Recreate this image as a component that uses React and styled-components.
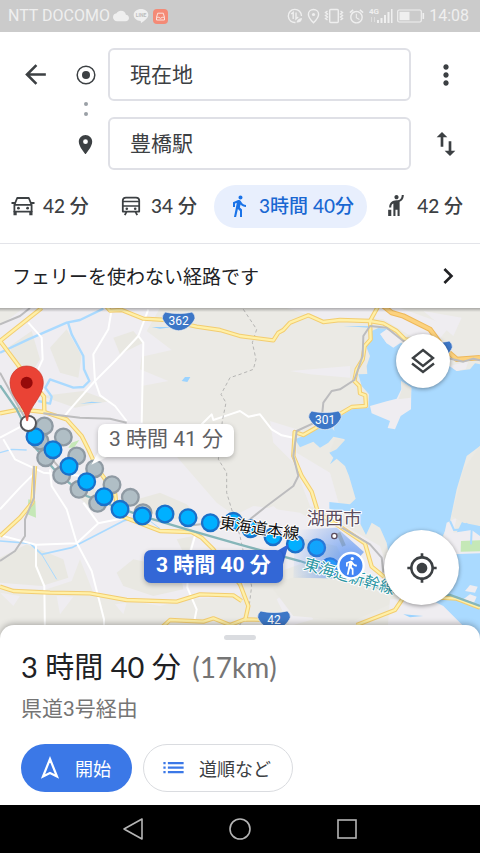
import styled, { createGlobalStyle } from "styled-components";
import {
  MdAlarm,
  MdArrowBack,
  MdChevronRight,
  MdCloud,
  MdDirectionsWalk,
  MdHail,
  MdList,
  MdMoreVert,
  MdMyLocation,
  MdPlace,
  MdSwapVert,
} from "react-icons/md";

const GlobalStyle = createGlobalStyle`
  * {
    box-sizing: border-box;
  }
  body {
    margin: 0;
    background: #fff;
    color: #3c4043;
    font-family: Roboto, "Noto Sans CJK JP", sans-serif;
  }
  button, input {
    font: inherit;
    color: inherit;
  }
  svg {
    display: block;
    flex-shrink: 0;
  }
`;

const brandFont = `Lato, "Noto Sans CJK JP", sans-serif`;

const Page = styled.div`
  display: flex;
  flex-direction: column;
  min-height: 100vh;
`;

const StatusBar = styled.div`
  display: flex;
  align-items: center;
  justify-content: space-between;
  height: 32px;
  padding: 0 11px 0 8px;
  background: #cbcbcb;
  color: #efefef;
  font-size: 16px;
  line-height: 32px;
`;

const StatusGroup = styled.div`
  display: flex;
  align-items: center;
  gap: ${props => props.$gap}px;
`;

const Directions = styled.header`
  padding: 16px 0 15px;
  border-bottom: 1px solid #e3e4e9;
`;

const Stops = styled.div`
  display: grid;
  grid-template-columns: 70px 31px 1fr 69px;
  row-gap: 16px;
  align-items: center;
  justify-items: center;
`;

const IconButton = styled.button`
  display: flex;
  align-items: center;
  justify-content: center;
  width: 48px;
  height: 48px;
  padding: 0;
  border: 0;
  background: none;
`;

const StopInput = styled.input`
  justify-self: stretch;
  min-width: 0;
  height: 53px;
  margin-left: 7px;
  padding: 0 20px 3px;
  border: 2px solid #dfe0e6;
  border-radius: 6px;
  background: #fff;
  font-size: 21px;
  outline: none;
`;

const StopMarks = styled.div`
  grid-column: 2;
  grid-row: 1 / span 2;
  display: flex;
  flex-direction: column;
  align-items: center;
  gap: 17px;
  padding-top: 2px;
`;

const Modes = styled.nav`
  display: flex;
  justify-content: space-between;
  margin: 15px 4px 0 -2px;
`;

const ModeButton = styled.button`
  display: flex;
  align-items: center;
  gap: 8px;
  height: 43px;
  padding: 0 13px 2px;
  border: 0;
  border-radius: 22px;
  background: ${props => (props.$active ? "#e8effd" : "none")};
  color: ${props => (props.$active ? "#1967d2" : "#3c4043")};
  font-family: ${brandFont};
  font-size: 19px;
  font-weight: 500;
  line-height: 24px;
  white-space: nowrap;
`;

const Notice = styled.button`
  display: flex;
  align-items: center;
  justify-content: space-between;
  height: 64px;
  padding: 0 16px 1px 12px;
  border: 0;
  background: #fff;
  color: #202124;
  font-size: 19px;
  text-align: left;
`;

const Map = styled.main`
  position: relative;
  flex: 1 0 333px;
  overflow: hidden;
  background: #ebeae5;
`;

const MapCanvas = styled.svg`
  width: 100%;
  height: 100%;
  position: absolute;
  inset: 0;
`;

const MapShade = styled.div`
  position: absolute;
  inset: 0 0 auto;
  height: 4px;
  background: linear-gradient(rgba(0, 0, 0, 0.28), transparent);
`;

const RouteBubble = styled.button`
  position: absolute;
  left: calc(50% + ${props => props.$x}px);
  top: ${props => props.$y}px;
  height: 33px;
  padding: 0 ${props => (props.$active ? 12 : 11)}px 3px;
  border: 0;
  border-radius: 7px;
  background: ${props => (props.$active ? "#3367d6" : "#fff")};
  color: ${props => (props.$active ? "#fff" : "#5f6063")};
  font-size: 21px;
  font-weight: ${props => (props.$active ? 700 : 400)};
  line-height: 30px;
  white-space: nowrap;
  box-shadow: 0 2px 5px rgba(0, 0, 0, 0.25);
`;

const Fab = styled.button`
  position: absolute;
  right: ${props => props.$right}px;
  top: ${props => props.$top}px;
  display: flex;
  align-items: center;
  justify-content: center;
  width: ${props => props.$size}px;
  height: ${props => props.$size}px;
  padding: 0;
  border: 0;
  border-radius: 50%;
  background: #fff;
  box-shadow: 0 1px 4px rgba(0, 0, 0, 0.4);
`;

const Sheet = styled.section`
  position: relative;
  margin-top: -16px;
  padding: 10px 21px 13px;
  border-radius: 14px 14px 0 0;
  background: #fff;
  box-shadow: 0 -1px 6px rgba(0, 0, 0, 0.3);
`;

const Handle = styled.div`
  width: 32px;
  height: 5px;
  margin: 0 auto;
  border-radius: 3px;
  background: #dadce0;
`;

const Duration = styled.h1`
  margin: 7px 0 0;
  color: #202124;
  font-family: ${brandFont};
  font-size: 29px;
  font-weight: 400;
  line-height: 40px;
`;

const Distance = styled.span`
  margin-left: 4px;
  color: #757575;
  font-size: 28px;
`;

const Via = styled.p`
  margin: 6px 0 0;
  color: #757575;
  font-size: 21px;
  line-height: 32px;
`;

const Actions = styled.div`
  display: flex;
  gap: 11px;
  margin-top: 19px;
`;

const ActionButton = styled.button`
  display: flex;
  align-items: center;
  gap: 12px;
  height: 48px;
  padding: 0 21px 1px 16px;
  border: ${props => (props.$primary ? "0" : "1px solid #dadce0")};
  border-radius: 24px;
  background: ${props => (props.$primary ? "#3b78e7" : "#fff")};
  color: ${props => (props.$primary ? "#fff" : "#3c4043")};
  font-size: 18px;
`;

const NavBar = styled.footer`
  display: flex;
  align-items: center;
  justify-content: center;
  gap: 59px;
  height: 48px;
  background: #000;
`;

const RoadLines = {
  major: [
    "M0,105 L125,6",
    "M0,105 L60,185 L132,272 L133,318",
    "M0,322 L60,310 L133,318 L200,340 L245,390 L265,430 L290,485 L345,560 L350,600 L370,630",
    "M318,0 L330,14 L365,12 L430,38 L500,42 L590,62 L660,72 L720,90 L820,103 L835,80 L850,72 L870,50 L925,28 L970,48 L1020,42 L1110,45 L1135,0",
    "M1110,45 L1150,52 L1190,75 L1215,100 L1260,105",
    "M1110,45 L1112,100 L1094,120 L1088,160 L1070,190 L1063,225 L1078,240 L1080,262 L1096,268 L1098,300 L1055,303 L975,350 L910,387 L884,378 L880,450 L905,510 L935,557 L955,622 L1020,662 L1095,712 L1115,782 L1170,827 L1210,875 L1320,875 L1370,878 L1440,905",
    "M1210,875 L1185,912 L1070,957",
    "M105,480 L97,590 L60,635 L0,690",
    "M350,625 L480,675 L575,678 L605,695 L640,730 L720,835 L745,900 L735,945",
    "M0,842 L40,855 L150,860 L270,862 L380,882 L530,887 L600,865 L700,868 L725,885",
    "M485,965 L510,942 L610,947 L640,937 L690,957 L735,940 L860,943",
  ],
  minor: [
    "M85,50 L125,95 L128,160 L110,200 L130,255",
    "M335,10 L325,70 L280,145 L285,225 L210,310 L190,335",
    "M445,10 L415,90 L430,110 L425,350",
    "M415,90 L345,165 L285,225 L300,268 L345,300 L380,345",
    "M10,400 L45,460 L130,500 L250,510",
    "M0,395 L75,355",
    "M150,490 L155,540 L200,610 L230,710 L275,795 L312,940 L312,990",
    "M0,610 L60,545 L105,500",
    "M0,688 L108,716 L230,712 L295,652 L390,632",
    "M108,716 L108,780 L133,840 L135,990",
    "M250,590 L295,652",
    "M585,690 L565,760 L562,845 L590,910 L582,950",
    "M600,360 L635,325 L640,342 L690,325 L720,315 L745,332 L780,325 L815,370 L845,388 L880,395",
  ],
  rail: [
    "M0,200 L60,310 L130,430 L200,510",
    "M0,55 L60,30 L90,6",
    "M102,480 L102,575 L75,640 L75,690 L45,735 L0,765",
    "M130,322 L240,335 L330,338 L380,350",
    "M1440,163 L1420,158 L1390,167 L1330,153 L1210,105 L1160,65 L1110,60 L1090,90 L1088,150 L1063,222 L1020,250 L995,255 L970,290 L965,340 L890,375 L880,450 L895,510 L880,540 L800,600 L750,640",
    "M560,660 L720,640",
    "M1020,662 L1110,715 L1145,755 L1150,800",
  ],
};

// Centres of the dots that mark a walking route
const altDots = [
  [133, 360], [190, 393], [230, 450], [284, 488], [336, 536], [391, 574],
  [429, 620], [120, 405], [137, 455], [185, 508], [237, 550], [293, 592],
];
const routeDots = [
  [105, 392], [159, 431], [207, 481], [260, 527], [312, 572], [360, 610],
  [427, 630], [495, 624], [564, 635], [631, 650], [700, 646], [752, 668],
  [819, 692], [886, 714], [950, 725], [990, 782],
];

function Shield({ x, y, label }) {
  return (
    <g transform={`translate(${x} ${y})`}>
      <path
        d="M-40,-27 C-15,-21 15,-21 40,-27 Q50,-18 49,-8 C43,9 22,29 0,29 C-22,29 -43,9 -49,-8 Q-50,-18 -40,-27Z"
        fill="#3d77c7"
        stroke="#f0eeee"
        strokeWidth="2"
      />
      <text y="12" fill="#fff" fontSize="36" textAnchor="middle">{label}</text>
    </g>
  );
}

function MapDrawing() {
  return (
    <MapCanvas viewBox="0 6 1440 999" preserveAspectRatio="xMidYMin slice" role="img" aria-label="地図">
      <defs>
        <radialGradient id="beam" gradientUnits="userSpaceOnUse" cx="1053" cy="778" r="190">
          <stop offset="0.15" stopColor="#4285f4" stopOpacity="0.65" />
          <stop offset="1" stopColor="#4285f4" stopOpacity="0" />
        </radialGradient>
      </defs>
      <g fill="#efedf1">
        <path d="M0,60 L70,6 L480,6 L440,75 L515,132 L425,152 L420,190 L505,225 L425,240 L422,345 L520,440 L650,590 L720,640 L820,600 L880,650 L1000,640 L1140,720 L1180,840 L1050,800 L940,760 L830,800 L760,760 L720,870 L560,880 L480,900 L370,880 L280,860 L240,760 L215,825 L140,850 L0,850Z" />
        <path d="M860,6 L1200,6 L1350,60 L1310,110 L1240,95 L1150,40 L1110,35 L1060,50 L970,40Z" />
        <path d="M810,345 L890,370 L890,440 L990,500 L1030,640 L930,600 L880,470 L820,410Z" />
        <path d="M870,195 L1050,180 L1050,215 L930,205Z M1270,15 L1385,35 L1360,90Z" />
        <path d="M1200,850 L1440,900 L1440,1005 L1180,1005Z M0,860 L60,870 L40,900Z M170,870 L220,872 L180,925Z M345,895 L380,890 L370,925Z" />
        <path d="M830,880 L860,860 L900,885 L940,940 L870,960Z M720,620 L760,600 L900,620 L1000,680 L900,760 L780,700Z" />
      </g>
      <g fill="#e9e8e2">
        <path d="M30,120 L95,75 L120,160 L95,200 L60,190 L35,150Z M150,125 L200,70 L245,150 L235,215 L180,200Z" />
        <path d="M340,95 L400,75 L430,110 L360,145Z M125,270 L250,255 L330,285 L225,305Z" />
        <path d="M0,755 L80,715 L190,760 L205,815 L125,840 L0,830Z M375,590 L480,560 L560,595 L600,640 L500,640Z" />
        <path d="M400,760 L540,790 L550,850 L460,870 L370,840 L350,800Z M530,700 L580,690 L560,760Z" />
        <path d="M860,820 L980,790 L1140,850 L1180,890 L1060,945 L880,930 L820,850Z" />
        <path d="M900,695 L1010,720 L1030,760 L930,750Z M250,520 L330,590 L290,620 L220,560Z" />
      </g>
      <path
        d="M1115,75 L1135,66 L1165,70 L1145,90 L1160,112 L1205,110 L1225,150 L1348,180 L1370,195 L1410,190 L1425,172 L1440,175 L1440,420 L1400,450 L1370,550 L1350,645 L1328,690 L1350,720 L1390,640 L1440,660 L1440,1005 L1390,960 L1330,900 L1250,860 L1180,820 L1160,710 L1140,665 L1115,650 L1098,687 L1075,642 L1040,622 L988,608 L988,588 L1050,595 L1067,578 L1047,510 L1035,480 L1010,458 L990,475 L1000,455 L988,440 L1035,400 L1000,392 L985,410 L960,425 L940,407 L900,424 L885,400 L910,390 L985,350 L1003,375 L998,345 L1055,310 L1105,305 L1107,265 L1085,240 L1075,205 L1102,204 L1100,180 L1110,150 L1100,125Z"
        fill="#aadaff"
      />
      <g fill="#efedf1">
        <path d="M1203,225 L1234,245 L1233,310 L1202,330 L1185,370 L1163,366 L1170,345 L1115,322 L1110,300 L1160,286 L1190,278 L1204,250Z" />
        <path d="M1140,84 L1160,70 L1210,105 L1180,125 L1160,112Z M1350,180 L1405,165 L1398,188 L1370,195Z" />
        <path d="M1370,635 L1340,650 L1325,720 L1355,745 L1440,742 L1440,690 L1415,672 L1360,680Z" />
        <path d="M1395,855 L1410,837 L1433,842 L1425,860Z M1390,880 L1410,865 L1430,872 L1422,890Z" />
        <path d="M1170,880 L1270,880 L1390,975 L1410,1005 L1160,1005Z" />
      </g>
      <path d="M1203,225 L1234,245 L1232,275 L1195,280 L1206,250Z M1390,492 L1440,420 L1440,660 L1390,650 L1355,630Z M1005,400 L1035,402 L1010,430 L988,440Z" fill="#e9e8e2" />
      <path d="M1383,705 L1440,703 L1440,736 L1382,737Z M85,580 L106,584 L108,635 L82,625Z M215,410 L238,402 L222,425 L205,425Z" fill="#c5e8b7" />
      <path d="M1350,645 L1362,672 L1395,670 L1400,655 L1415,665 L1440,672 M1415,670 L1413,715" fill="none" stroke="#aadaff" strokeWidth="6" />
      <path d="M545,225 L555,213 L571,213 L562,228Z M240,293 L275,287 L307,290 L275,291Z M455,63 L520,63 L480,68Z M1030,60 L1110,61 L1110,65Z M1210,925 L1270,930 L1230,934Z" fill="#9bd3ff" />
      <g fill="none" stroke="#aadaff" strokeWidth="7" strokeLinejoin="round">
        <path d="M0,140 L85,100 L200,50 L240,42 L310,8" />
        <path d="M204,50 L215,85 L250,150 L252,190 L268,225 L250,243 L220,245 L150,220 L136,245 L155,272 L150,293 L115,285" />
        <path d="M0,440 L35,430 L80,432" strokeWidth="4" />
        <path d="M0,705 L90,712 L125,745 L215,725 L370,645 L420,630" strokeWidth="5" />
        <path d="M125,745 L170,820 M450,645 L480,668" strokeWidth="3" />
      </g>
      <g fill="none" stroke="#fff" strokeWidth="6" strokeLinejoin="round">
        {RoadLines.minor.map(d => <path key={d} d={d} />)}
      </g>
      <g fill="none" stroke="#9a9a9a" strokeWidth="2" strokeDasharray="10 8">
        <path d="M730,10 L770,70 L757,110 L768,160 L760,190 L720,205 L690,215 L663,265 L678,290 L667,345 L655,460 L680,500 L680,560 L695,610 L720,690 L735,760 L755,840 L745,920 L710,970" />
      </g>
      <g fill="none" strokeLinejoin="round">
        {RoadLines.major.map(d => <path key={d} d={d} stroke="#f3cd70" strokeWidth="13" />)}
        {RoadLines.major.map(d => <path key={d} d={d} stroke="#fff0a8" strokeWidth="7" />)}
        <path d="M1150,0 L1175,20 L1210,30 L1290,70 L1330,125 L1370,160 L1440,155" stroke="#eeb85a" strokeWidth="16" />
        <path d="M1150,0 L1175,20 L1210,30 L1290,70 L1330,125 L1370,160 L1440,155" stroke="#fcd27e" strokeWidth="10" />
        <path d="M1015,680 L1032,720" stroke="#c8c2a8" strokeWidth="12" />
      </g>
      <g fill="none" stroke="#bcbcbe" strokeWidth="6" strokeLinejoin="round">
        {RoadLines.rail.map(d => <path key={d} d={d} />)}
      </g>
      <path d="M0,238 L50,310 L110,430 L180,510 L260,570 L420,628 L560,670 L720,716 L900,765 L1180,860 L1350,867 L1440,900" fill="none" stroke="#86b6b9" strokeWidth="7" />

      <Shield x={536} y={45} label="362" />
      <Shield x={975} y={342} label="301" />
      <Shield x={822} y={942} label="42" />
      <Shield x={1308} y={132} label="" />

      <g fill="#b0bec5" stroke="#8f9aa3" strokeWidth="7">
        {altDots.map(([x, y]) => <circle key={`${x}-${y}`} cx={x} cy={y} r="25" />)}
      </g>
      <g fill="#00b0ff" stroke="#1c70c8" strokeWidth="7">
        {routeDots.map(([x, y]) => <circle key={`${x}-${y}`} cx={x} cy={y} r="25" />)}
      </g>
      <path d="M1055,779 L1092,738 L1010,665 L885,672 L880,815 L1055,818Z" fill="url(#beam)" />

      <g fontFamily='"Noto Sans CJK JP", sans-serif' paintOrder="stroke" stroke="#fff" strokeWidth="6" strokeLinejoin="round">
        <text transform="translate(657 667) rotate(8)" fontSize="48" fill="#111">東海道本線</text>
        <text transform="translate(908 788) rotate(16)" fontSize="47" fill="#2d97a5">東海道新幹線</text>
        <text x="920" y="657" fontSize="55" fill="#5b4c5e">湖西市</text>
      </g>
      <circle cx="1003" cy="690" r="8" fill="#fff" stroke="#5b4c5e" strokeWidth="4" />

      <circle cx="1053" cy="779" r="38" fill="#4285f4" stroke="#fff" strokeWidth="7" />
      <g transform="translate(1023 749) scale(2.5)">
        <MdDirectionsWalk size={24} color="#fff" />
      </g>

      <circle cx="85" cy="352" r="23" fill="#fff" stroke="#55565a" strokeWidth="6" />
      <path d="M80,344 C75,300 30,275 30,230 C30,202 52,180 80,180 C108,180 130,202 130,230 C130,275 86,300 83,344Z" fill="#ea4335" stroke="#c9362b" strokeWidth="2" />
      <circle cx="80" cy="230" r="18" fill="#960a0a" />

      <path d="M296,435 L274,476 L340,444Z" fill="#fff" />
      <path d="M820,742 L866,714 L849,775Z" fill="#3367d6" />
    </MapCanvas>
  );
}

function LineIcon() {
  return (
    <svg width="16" height="16" viewBox="0 0 16 16">
      <path d="M8,1 C12,1 15.3,3.5 15.3,7 C15.3,10 11.5,12.7 8.3,15 C7.8,15.2 8,13.5 7.6,12.9 C3.5,12.8 0.7,10.2 0.7,7 C0.7,3.5 4,1 8,1Z" fill="currentColor" />
      <text x="8" y="8.8" fontSize="5" fontWeight="700" textAnchor="middle" fill="#bdbdbd">LINE</text>
    </svg>
  );
}

function InboxIcon() {
  return (
    <svg width="15" height="15" viewBox="0 0 15 15">
      <rect width="15" height="15" rx="4" fill="#f48a76" />
      <path d="M3.5,8.5 L4.7,4.2 H10.3 L11.5,8.5 V11 H3.5Z M3.5,8.3 H5.8 Q7.5,10.3 9.2,8.3 H11.5" fill="none" stroke="#fbe3de" strokeWidth="1" strokeLinejoin="round" />
    </svg>
  );
}

function DataSaverIcon() {
  return (
    <svg width="16" height="16" viewBox="0 0 16 16" fill="none" stroke="currentColor" strokeWidth="1.4">
      <path d="M14.5,8 A6.6,6.6 0 1 0 8.5,14.5" />
      <path d="M4.2,6 L6.2,4.5 V11 M9,4.5 V11 L11.2,9" />
      <path d="M9.5,14.5 Q10,10.5 15,10 Q14.8,14.8 9.5,14.5Z" fill="currentColor" stroke="none" />
    </svg>
  );
}

function PinStatusIcon() {
  return (
    <svg width="13" height="16" viewBox="0 0 13 16">
      <path d="M6.5,1.5 C3.5,1.5 1.4,3.6 1.4,6.4 C1.4,9.6 6.5,14.8 6.5,14.8 C6.5,14.8 11.6,9.6 11.6,6.4 C11.6,3.6 9.5,1.5 6.5,1.5Z" fill="none" stroke="currentColor" strokeWidth="1.4" />
      <circle cx="6.5" cy="6.5" r="1.6" fill="currentColor" />
    </svg>
  );
}

function VibrateIcon() {
  return (
    <svg width="20" height="16" viewBox="0 0 20 16" fill="none" stroke="currentColor" strokeWidth="1.4">
      <rect x="5.7" y="1.5" width="8.6" height="13" rx="1" />
      <path d="M3.5,3 L1.5,4.5 L3.5,6 L1.5,7.5 L3.5,9 L1.5,10.5 L3.5,12 M16.5,3 L18.5,4.5 L16.5,6 L18.5,7.5 L16.5,9 L18.5,10.5 L16.5,12" />
    </svg>
  );
}

function SignalIcon() {
  return (
    <svg width="24" height="18" viewBox="0 0 24 18" fill="currentColor">
      <text y="7" fontSize="8" fontWeight="700">4G</text>
      <path d="M2,10 h1 v5 h-1z M5,10 h1 v5 h-1z" opacity="0.5" />
      <path d="M8,13 h2 v3 h-2z M11.5,11 h2 v5 h-2z M15,8 h2 v8 h-2z M18.5,5 h2 v11 h-2z M22,2 h1.5 v14 h-1.5z" />
    </svg>
  );
}

function BatteryIcon() {
  return (
    <svg width="28" height="14" viewBox="0 0 28 14">
      <rect x="0.7" y="1" width="23.6" height="12" rx="1.5" fill="none" stroke="currentColor" strokeWidth="1.2" />
      <rect x="2.5" y="2.8" width="10" height="8.4" fill="currentColor" />
      <rect x="25.5" y="4" width="1.6" height="6" fill="currentColor" />
    </svg>
  );
}

function CarIcon() {
  return (
    <svg width="24" height="24" viewBox="0 0 24 24" fill="none" stroke="currentColor" strokeWidth="1.8">
      <path d="M3.4,17.6 V10.8 L6.2,4 H17.8 L20.6,10.8 V17.6Z M3.4,10.8 H20.6" strokeLinejoin="round" />
      <path d="M0.5,9 H4 M20,9 H23.5" />
      <path d="M2.5,17 h3.2 v4.3 h-3.2z M18.3,17 h3.2 v4.3 h-3.2z" fill="currentColor" stroke="none" />
      <g fill="currentColor" stroke="none">
        <circle cx="7.4" cy="14.2" r="1.4" />
        <circle cx="16.6" cy="14.2" r="1.4" />
      </g>
    </svg>
  );
}

function TransitIcon() {
  return (
    <svg width="24" height="24" viewBox="0 0 24 24" fill="none" stroke="currentColor" strokeWidth="1.8">
      <path d="M3.8,17.6 V6.5 Q3.8,3.6 7,3.6 H17 Q20.2,3.6 20.2,6.5 V17.6Z" strokeLinejoin="round" />
      <path d="M4,7.4 H20 M4,12 H20" strokeWidth="1.5" />
      <path d="M7.5,17.8 L5.8,21.2 M16.5,17.8 L18.2,21.2" />
      <g fill="currentColor" stroke="none">
        <circle cx="7.8" cy="14.8" r="1.3" />
        <circle cx="16.2" cy="14.8" r="1.3" />
      </g>
    </svg>
  );
}

function LayersIcon() {
  return (
    <svg width="28" height="28" viewBox="0 0 28 28" fill="none" stroke="currentColor" strokeWidth="2.4">
      <path d="M14,3 L24,11 L14,19 L4,11Z M3,16.5 L14,25 L25,16.5" />
    </svg>
  );
}

export default function App() {
  return (
    <Page>
      <GlobalStyle />
      <StatusBar>
        <StatusGroup $gap={3}>
          <span>NTT DOCOMO</span>
          <StatusGroup $gap={4}>
            <MdCloud size={16} />
            <LineIcon />
            <InboxIcon />
          </StatusGroup>
        </StatusGroup>
        <StatusGroup $gap={4}>
          <DataSaverIcon />
          <PinStatusIcon />
          <VibrateIcon />
          <MdAlarm size={17} />
          <SignalIcon />
          <BatteryIcon />
          <span>14:08</span>
        </StatusGroup>
      </StatusBar>

      <Directions>
        <Stops>
          <IconButton aria-label="戻る"><MdArrowBack size={31} /></IconButton>
          <StopMarks>
            <svg width="20" height="20" viewBox="0 0 20 20">
              <circle cx="10" cy="10" r="8.8" fill="none" stroke="#3c4043" strokeWidth="1.5" />
              <circle cx="10" cy="10" r="4" fill="#3c4043" />
            </svg>
            <svg width="4" height="14" viewBox="0 0 4 14" fill="#9aa0a6">
              <circle cx="2" cy="2" r="2" />
              <circle cx="2" cy="12" r="2" />
            </svg>
            <MdPlace size={23} />
          </StopMarks>
          <StopInput aria-label="出発地" defaultValue="現在地" />
          <IconButton aria-label="その他"><MdMoreVert size={32} /></IconButton>
          <span />
          <StopInput aria-label="目的地" defaultValue="豊橋駅" />
          <IconButton aria-label="出発地と目的地を入れ替え"><MdSwapVert size={32} /></IconButton>
        </Stops>
        <Modes>
          <ModeButton><CarIcon />42 分</ModeButton>
          <ModeButton><TransitIcon />34 分</ModeButton>
          <ModeButton $active><MdDirectionsWalk size={24} color="#1a73e8" />3時間 40分</ModeButton>
          <ModeButton><MdHail size={25} />42 分</ModeButton>
        </Modes>
      </Directions>

      <Notice>
        フェリーを使わない経路です
        <MdChevronRight size={32} />
      </Notice>

      <Map>
        <MapDrawing />
        <MapShade />
        <RouteBubble $x={-142} $y={116}>3 時間 41 分</RouteBubble>
        <RouteBubble $active $x={-96} $y={242}>3 時間 40 分</RouteBubble>
        <Fab $size={54} $right={30} $top={26} aria-label="レイヤ"><LayersIcon /></Fab>
        <Fab $size={75} $right={21} $top={222} aria-label="現在地を表示"><MdMyLocation size={32} /></Fab>
      </Map>

      <Sheet>
        <Handle />
        <Duration>3 時間 40 分 <Distance>(17km)</Distance></Duration>
        <Via>県道3号経由</Via>
        <Actions>
          <ActionButton $primary>
            <svg width="26" height="26" viewBox="0 0 26 26" fill="none" stroke="currentColor" strokeWidth="2.2">
              <path d="M13,4 L20,21.5 L13,18 L6,21.5Z" />
            </svg>
            開始
          </ActionButton>
          <ActionButton>
            <MdList size={27} color="#3b78e7" />
            道順など
          </ActionButton>
        </Actions>
      </Sheet>

      <NavBar>
        <IconButton aria-label="戻る">
          <svg width="24" height="24" viewBox="0 0 24 24" fill="none" stroke="#b5b5b5" strokeWidth="1.6">
            <path d="M21,2 V22 L3,12Z" strokeLinejoin="round" />
          </svg>
        </IconButton>
        <IconButton aria-label="ホーム">
          <svg width="24" height="24" viewBox="0 0 24 24" fill="none" stroke="#b5b5b5" strokeWidth="1.6">
            <circle cx="12" cy="12" r="10" />
          </svg>
        </IconButton>
        <IconButton aria-label="最近のアプリ">
          <svg width="24" height="24" viewBox="0 0 24 24" fill="none" stroke="#b5b5b5" strokeWidth="1.6">
            <rect x="3" y="3" width="18" height="18" />
          </svg>
        </IconButton>
      </NavBar>
    </Page>
  );
}
